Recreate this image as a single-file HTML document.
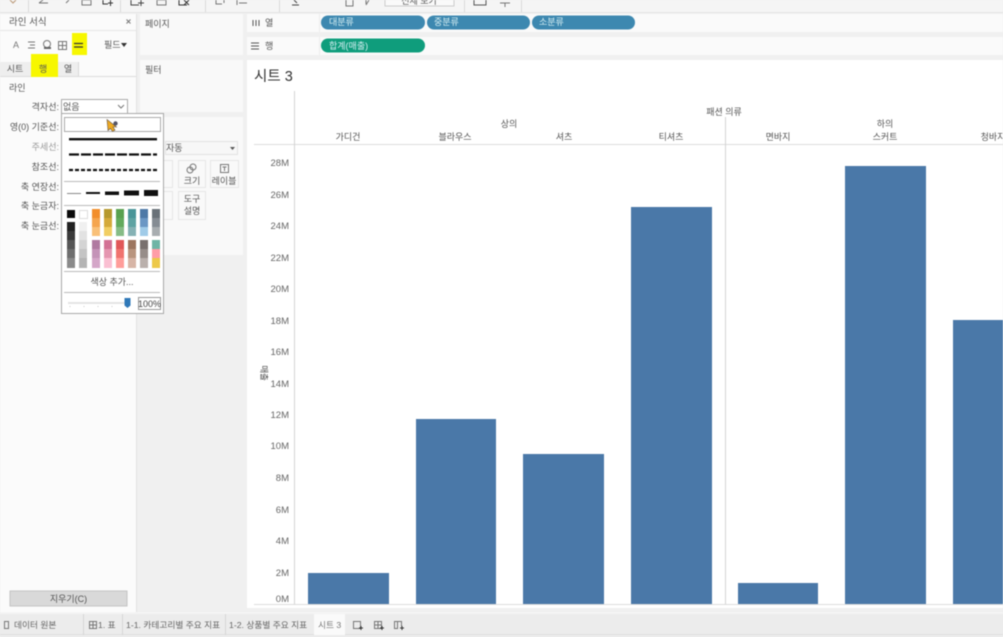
<!DOCTYPE html>
<html lang="ko">
<head>
<meta charset="utf-8">
<title>시트 3</title>
<style>
html,body{margin:0;padding:0;width:1003px;height:637px;overflow:hidden;background:#f1f1f1}
svg{display:block;filter:blur(.5px)}
text{font-family:"Liberation Sans","Noto Sans CJK KR",sans-serif;font-size:9px;fill:#555}
.m{text-anchor:middle}
.e{text-anchor:end}
.w{fill:#d5eef2}
.a{font-size:9.500px;fill:#666;text-anchor:end}
.i{fill:none;stroke:#777;stroke-width:1}
.tb{font-size:8.700px;fill:#666}
</style>
</head>
<body>
<svg width="1003" height="637" viewBox="0 0 1003 637" xmlns="http://www.w3.org/2000/svg">
<rect width="1003" height="637" fill="#f0f0f0"/>

<!-- toolbar -->
<rect width="1003" height="12" fill="#f5f5f5"/>
<rect y="12" width="1003" height="1" fill="#e4e4e4"/>
<g fill="#d9d9d9"><rect x="28" width="1" height="12"/><rect x="120" width="1" height="12"/><rect x="205" width="1" height="12"/><rect x="279" width="1" height="12"/><rect x="464" width="1" height="12"/><rect x="521" width="1" height="12"/></g>
<g class="i">
<path d="M10 0l3 3 3-3" stroke="#b97"/>
<path d="M39 3l4-3M39 3h9M69 0l-3 3"/>
<path d="M82 0h9v5h-9z"/>
<path d="M103 0v4h5M108 3h5M110.500 0v6" stroke="#333"/>
<path d="M131 0v5h8M141 0v6M138 3h6" stroke="#444"/>
<path d="M157 0h9v5h-9z"/>
<path d="M179 0v5h8M184 0l5 5M189 0l-5 5" stroke="#333"/>
<path d="M216 0v4h6M224 0v3"/>
<path d="M237 0v5M239 3h8"/>
<path d="M292 5h7M294 0l3 3" stroke="#444"/>
<path d="M346 0v6h7v-6"/>
<path d="M366 0v4M369 0l-3 5"/>
<path d="M474 0v5h12v-5" stroke="#555"/>
<path d="M500 3h10M505 3v4"/>
</g>
<rect x="385" y="-1" width="69" height="7" fill="#fafafa" stroke="#ccc"/>
<text x="419" y="4" class="m">전체 보기</text>

<!-- left format panel -->
<rect x="0" y="14" width="136" height="598" fill="#fbfbfb"/>
<rect x="136" y="14" width="1" height="598" fill="#e2e2e2"/>
<text x="9" y="25" style="font-size:9.500px">라인 서식</text>
<path d="M126.500 19.500l4 4M130.500 19.500l-4 4" stroke="#777" fill="none"/>
<rect x="0" y="30" width="136" height="1" fill="#e7e7e7"/>
<text x="16" y="48" class="m" style="fill:#777">A</text>
<path class="i" d="M28 42h7M30 45h5M28 48h7" stroke="#999"/>
<circle cx="47" cy="44" r="3.500" class="i" stroke="#555"/>
<path d="M44 47h7v2h-7z" fill="#666"/>
<path class="i" d="M58.500 41.500h8v8h-8zM62.500 41.500v8M58.500 45.500h8"/>
<rect x="72" y="33" width="15" height="22" fill="#f7f700"/>
<path d="M74 43.500h9M74 47h9" stroke="#333" stroke-width="1.300" fill="none"/>
<text x="104" y="48">필드</text>
<path d="M121 43h6l-3 4z" fill="#333"/>

<rect x="0" y="76" width="136" height="1" fill="#dcdcdc"/>
<rect x="0" y="62" width="31" height="14" fill="#eeeeee"/>
<rect x="57" y="62" width="21" height="14" fill="#eeeeee"/>
<rect x="78" y="62" width="1" height="14" fill="#d8d8d8"/>
<rect x="31" y="54" width="27" height="23" fill="#f7f700"/>
<text x="15" y="72" class="m">시트</text>
<text x="43" y="72" class="m">행</text>
<text x="68" y="72" class="m">열</text>

<text x="9" y="91">라인</text>
<text x="59" y="110" class="e">격자선:</text>
<text x="59" y="130" class="e">영(0) 기준선:</text>
<text x="59" y="150" class="e" style="fill:#999">주세선:</text>
<text x="59" y="170" class="e">참조선:</text>
<text x="59" y="190" class="e">축 연장선:</text>
<text x="59" y="209" class="e">축 눈금자:</text>
<text x="59" y="229" class="e">축 눈금선:</text>
<rect x="61.500" y="99.500" width="66" height="14" fill="#fff" stroke="#aaa"/>
<text x="63" y="110">없음</text>
<path class="i" d="M118 105l3 3 3-3"/>
<rect x="10" y="591" width="117" height="15" fill="#d9d9d9" stroke="#c4c4c4"/>
<text x="68.500" y="602" class="m">지우기(C)</text>

<!-- pages / filters / marks -->
<rect x="140" y="14" width="103" height="41" fill="#f9f9f9"/>
<rect x="140" y="60" width="103" height="52" fill="#f9f9f9"/>
<rect x="140" y="117" width="103" height="138" fill="#f9f9f9"/>
<text x="145" y="27">페이지</text>
<text x="145" y="73">필터</text>
<rect x="165.500" y="141.500" width="72" height="13" fill="#f7f7f7" stroke="#e2e2e2"/>
<text x="166" y="151">자동</text>
<path d="M230 147h5l-2.500 3z" fill="#555"/>
<g fill="#f9f9f9" stroke="#e6e6e6">
<rect x="160.500" y="160.500" width="12" height="27"/>
<rect x="160.500" y="191.500" width="12" height="28"/>
<rect x="178.500" y="160.500" width="27" height="27"/>
<rect x="210.500" y="160.500" width="28" height="27"/>
<rect x="178.500" y="191.500" width="27" height="28"/>
</g>
<circle cx="190" cy="170" r="3" class="i"/><circle cx="193" cy="167" r="3" class="i"/>
<rect x="220.500" y="164.500" width="8" height="8" class="i"/>
<path d="M222.500 167h4M224.500 167v4" stroke="#777" fill="none"/>
<text x="192" y="184" class="m">크기</text>
<text x="224" y="184" class="m">레이블</text>
<text x="192" y="202" class="m">도구</text>
<text x="192" y="214" class="m">설명</text>

<!-- shelves -->
<rect x="247" y="14" width="756" height="18" fill="#fafafa"/>
<rect x="247" y="37" width="756" height="18" fill="#fafafa"/>
<rect x="319" y="14" width="1" height="18" fill="#ececec"/>
<rect x="319" y="37" width="1" height="18" fill="#ececec"/>
<path d="M253 20v6M256 20v6M259 20v6" stroke="#555" fill="none"/>
<text x="265" y="26">열</text>
<path d="M251 43h8M251 46h8M251 49h8" stroke="#555" fill="none"/>
<text x="265" y="49">행</text>
<rect x="321" y="15.500" width="104" height="14" rx="7" fill="#3d88b0"/>
<rect x="427" y="15.500" width="103" height="14" rx="7" fill="#3d88b0"/>
<rect x="532" y="15.500" width="103" height="14" rx="7" fill="#3d88b0"/>
<rect x="321" y="38.500" width="104" height="14" rx="7" fill="#0f9d7c"/>
<text x="329" y="25" class="w">대분류</text>
<text x="434" y="25" class="w">중분류</text>
<text x="539" y="25" class="w">소분류</text>
<text x="329" y="49" class="w">합계(매출)</text>

<!-- view -->
<rect x="247" y="60" width="756" height="548" fill="#fff"/>
<text x="254" y="81" style="font-size:14.500px;fill:#333">시트 3</text>
<rect x="254" y="144" width="749" height="1" fill="#dcdcdc"/>
<rect x="294" y="91" width="1" height="513" fill="#d4d4d4"/>
<rect x="725" y="117" width="1" height="487" fill="#d4d4d4"/>
<rect x="254" y="604" width="749" height="1" fill="#dcdcdc"/>
<text x="724" y="115" class="m">패션 의류</text>
<text x="509" y="127" class="m">상의</text>
<text x="885" y="127" class="m">하의</text>
<text x="348" y="140" class="m">가디건</text>
<text x="455" y="140" class="m">블라우스</text>
<text x="564" y="140" class="m">셔츠</text>
<text x="671" y="140" class="m">티셔츠</text>
<text x="778" y="140" class="m">면바지</text>
<text x="885" y="140" class="m">스커트</text>
<text x="993" y="140" class="m">청바지</text>

<g fill="#4a78a8">
<rect x="308" y="573" width="81" height="31"/>
<rect x="416" y="419" width="80" height="185"/>
<rect x="523" y="454" width="81" height="150"/>
<rect x="631" y="207" width="81" height="397"/>
<rect x="738" y="583" width="80" height="21"/>
<rect x="845" y="166" width="81" height="438"/>
<rect x="953" y="320" width="50" height="284"/>
</g>

<text x="289" y="166" class="a">28M</text>
<text x="289" y="198" class="a">26M</text>
<text x="289" y="229" class="a">24M</text>
<text x="289" y="261" class="a">22M</text>
<text x="289" y="292" class="a">20M</text>
<text x="289" y="324" class="a">18M</text>
<text x="289" y="355" class="a">16M</text>
<text x="289" y="387" class="a">14M</text>
<text x="289" y="418" class="a">12M</text>
<text x="289" y="449" class="a">10M</text>
<text x="289" y="481" class="a">8M</text>
<text x="289" y="513" class="a">6M</text>
<text x="289" y="544" class="a">4M</text>
<text x="289" y="576" class="a">2M</text>
<text x="289" y="602" class="a">0M</text>
<text transform="translate(261,373) rotate(90)" class="m" style="fill:#444;font-size:8.500px">매출</text>

<!-- popup -->
<rect x="61.500" y="113.500" width="102" height="200" fill="#fff" stroke="#a8a8a8"/>
<rect x="64.500" y="117.500" width="96" height="14" fill="#fff" stroke="#aaa"/>
<path d="M107 119.500l1 11 2.500-2 2 3 2.500-1.500-2-3h3.500z" fill="#eeaa22" stroke="#654" stroke-width=".6"/>
<circle cx="115.500" cy="123.500" r="2.200" fill="#556"/>
<rect x="69" y="138" width="88" height="2.400" fill="#111"/>
<path d="M69 154.500h88" stroke="#111" stroke-width="2.200" stroke-dasharray="10 2" fill="none"/>
<path d="M69 170h88" stroke="#111" stroke-width="2.200" stroke-dasharray="4 2" fill="none"/>
<rect x="64" y="181" width="96" height="1" fill="#bbb"/>
<rect x="67" y="193" width="14" height="1" fill="#888"/>
<rect x="86" y="192" width="14" height="2" fill="#111"/>
<rect x="105" y="191.500" width="14" height="3.500" fill="#111"/>
<rect x="124" y="190.500" width="15" height="5" fill="#111"/>
<rect x="144" y="190" width="14" height="6" fill="#111"/>
<rect x="64" y="205" width="96" height="1" fill="#bbb"/>
<rect x="67" y="210" width="8" height="8" fill="#0b0b0b"/>
<rect x="79.500" y="210.500" width="8" height="8" fill="#fff" stroke="#ddd"/>
<g>
<rect x="67" y="222" width="8" height="9" fill="#222"/><rect x="67" y="231" width="8" height="9" fill="#3a3a3a"/><rect x="67" y="240" width="8" height="9" fill="#565656"/><rect x="67" y="249" width="8" height="9" fill="#6e6e6e"/><rect x="67" y="258" width="8" height="10" fill="#8a8a8a"/>
<rect x="79" y="222" width="8" height="9" fill="#f0f0f0"/><rect x="79" y="231" width="8" height="9" fill="#e2e2e2"/><rect x="79" y="240" width="8" height="9" fill="#d4d4d4"/><rect x="79" y="249" width="8" height="9" fill="#c4c4c4"/><rect x="79" y="258" width="8" height="10" fill="#b4b4b4"/>
</g>
<g>
<rect x="92" y="209" width="8" height="9" fill="#f28e2b"/><rect x="92" y="218" width="8" height="9" fill="#f5a54e"/><rect x="92" y="227" width="8" height="9" fill="#f9c078"/>
<rect x="104" y="209" width="8" height="9" fill="#b6992d"/><rect x="104" y="218" width="8" height="9" fill="#d4aa3a"/><rect x="104" y="227" width="8" height="9" fill="#f1ce63"/>
<rect x="116" y="209" width="8" height="9" fill="#59a14f"/><rect x="116" y="218" width="8" height="9" fill="#62aa5c"/><rect x="116" y="227" width="8" height="9" fill="#86bc86"/>
<rect x="128" y="209" width="8" height="9" fill="#4a9598"/><rect x="128" y="218" width="8" height="9" fill="#5fa3a3"/><rect x="128" y="227" width="8" height="9" fill="#86b2b5"/>
<rect x="140" y="209" width="8" height="9" fill="#4e79a7"/><rect x="140" y="218" width="8" height="9" fill="#6b97c4"/><rect x="140" y="227" width="8" height="9" fill="#a0cbe8"/>
<rect x="152" y="209" width="8" height="9" fill="#6a7279"/><rect x="152" y="218" width="8" height="9" fill="#858c93"/><rect x="152" y="227" width="8" height="9" fill="#a8adb0"/>
<rect x="92" y="240" width="8" height="9" fill="#b07aa1"/><rect x="92" y="249" width="8" height="9" fill="#c493b8"/><rect x="92" y="258" width="8" height="10" fill="#d4a6c8"/>
<rect x="104" y="240" width="8" height="9" fill="#d37295"/><rect x="104" y="249" width="8" height="9" fill="#e595b0"/><rect x="104" y="258" width="8" height="10" fill="#fabfd2"/>
<rect x="116" y="240" width="8" height="9" fill="#e15759"/><rect x="116" y="249" width="8" height="9" fill="#f0736f"/><rect x="116" y="258" width="8" height="10" fill="#ff9d9a"/>
<rect x="128" y="240" width="8" height="9" fill="#9d7660"/><rect x="128" y="249" width="8" height="9" fill="#b9957f"/><rect x="128" y="258" width="8" height="10" fill="#d7b5a6"/>
<rect x="140" y="240" width="8" height="9" fill="#79706e"/><rect x="140" y="249" width="8" height="9" fill="#978d89"/><rect x="140" y="258" width="8" height="10" fill="#bab0ac"/>
<rect x="152" y="240" width="8" height="9" fill="#6fb5a6"/><rect x="152" y="249" width="8" height="9" fill="#ff9da7"/><rect x="152" y="258" width="8" height="10" fill="#edc948"/>
</g>
<rect x="64" y="271" width="96" height="1" fill="#bbb"/>
<text x="112" y="285" class="m">색상 추가...</text>
<rect x="64" y="292" width="96" height="1" fill="#bbb"/>
<rect x="68" y="302" width="58" height="2" fill="#e4e4e4"/>
<path d="M70 306v1M84 306v1M98 306v1M112 306v1" stroke="#ccc" fill="none"/>
<path d="M124.500 298h6v7.500l-3 2.500-3-2.500z" fill="#2f78b8"/>
<rect x="138.500" y="297.500" width="22" height="12" fill="#fff" stroke="#999"/>
<text x="149.500" y="307" class="m" style="fill:#444">100%</text>

<!-- tabs -->
<rect x="0" y="614" width="1003" height="23" fill="#ececec"/>
<rect x="0" y="612" width="1003" height="2" fill="#f4f4f4"/>
<rect x="0" y="634" width="1003" height="1" fill="#dfdfdf"/>
<path class="i" d="M4.500 621.500h4v7h-4z"/>
<text x="14" y="628" class="tb">데이터 원본</text>
<g fill="#d6d6d6"><rect x="83" y="614" width="1" height="21"/><rect x="122" y="614" width="1" height="21"/><rect x="225" y="614" width="1" height="21"/></g>
<path class="i" d="M89.500 621.500h7v7h-7zM93 621.500v7M89.500 625h7"/>
<text x="98" y="628" class="tb">1. 표</text>
<text x="126" y="628" class="tb">1-1. 카테고리별 주요 지표</text>
<text x="229" y="628" class="tb">1-2. 상품별 주요 지표</text>
<rect x="314" y="614" width="31" height="21" fill="#fafafa"/>
<text x="318" y="628" class="tb" style="fill:#777">시트 3</text>
<g class="i">
<path d="M353.500 621.500h7v7h-7z"/><path d="M359 628h4M361 626v4" stroke="#333"/>
<path d="M374.500 621.500h7v7h-7zM378 621.500v7M374.500 625h7"/><path d="M380 628h4M382 626v4" stroke="#333"/>
<path d="M394.500 621.500h3v7h-3zM397.500 621.500h4v5"/><path d="M400 628h4M402 626v4" stroke="#333"/>
</g>
</svg>
</body>
</html>
